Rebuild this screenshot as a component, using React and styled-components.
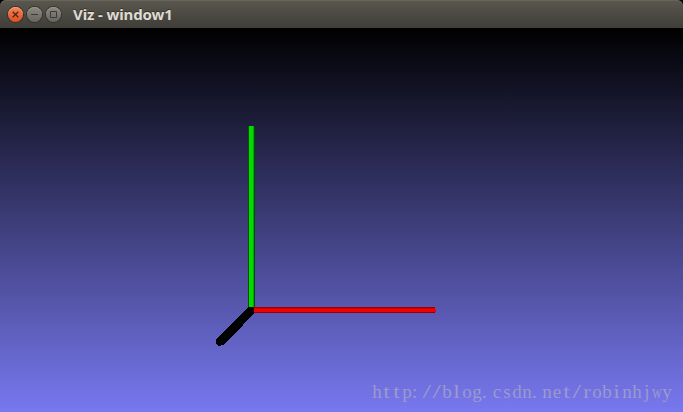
import React from "react";
import styled, { createGlobalStyle } from "styled-components";

const GlobalStyle = createGlobalStyle`
  body { margin: 0; background: #000; overflow: hidden; }
`;

const Window = styled.main`
  display: flex;
  flex-direction: column;
  width: 683px;
  height: 412px;
`;

const TitleBar = styled.header`
  display: flex;
  align-items: center;
  box-sizing: border-box;
  height: 28px;
  flex: none;
  padding: 1px 8px 0;
  border-radius: 6px 6px 0 0;
  background: linear-gradient(#5a574e, #3e3d38);
  box-shadow: inset 0 1px #67645b;
`;

const Controls = styled.div`
  display: flex;
  gap: 4px;
`;

const ControlButton = styled.button`
  display: block;
  box-sizing: border-box;
  width: 15px;
  height: 15px;
  padding: 0;
  border: 0;
  border-radius: 50%;
  background: ${(p) => (p.$close ? "linear-gradient(#f5835b, #df4f1c)" : "linear-gradient(#8a8880, #66645e)")};
  box-shadow: 0 0 0 1px #35332e, inset 0 1px ${(p) => (p.$close ? "#f79a78" : "#99978f")};
  color: ${(p) => (p.$close ? "#51291a" : "#3b3a35")};
`;

const Glyph = styled.svg`
  display: block;
  width: 15px;
  height: 15px;
  fill: none;
  stroke: currentColor;
  stroke-width: ${(p) => p.$weight || 1};
`;

const Title = styled.h1`
  margin: 0 0 2px 12px;
  font: 700 15px/20px "Noto Sans", "Open Sans", sans-serif;
  letter-spacing: -0.12px;
  color: #dfdbd2;
  text-shadow: 0 -1px #34332e;
  white-space: pre;
`;

const Viewport = styled.section`
  position: relative;
  flex: 1;
  background: linear-gradient(#000, #7878f0);
`;

const Axes = styled.svg`
  display: block;
  width: 683px;
  height: 384px;
`;

const Watermark = styled.div`
  position: absolute;
  right: 11px;
  bottom: 9px;
  display: flex;
  font: 19px/22px "Liberation Serif", serif;
  color: #9a9acb;
`;

const Cell = styled.span`
  display: flex;
  justify-content: ${(p) => (p.$left ? "flex-start" : "center")};
  width: 10px;
`;

const Letter = styled.span`
  transform: scaleX(${(p) => p.$scale});
`;

const scales = { w: 0.72, i: 1.25, l: 1.25, t: 1.25, r: 1.2, "/": 1.6 };
const address = "http://blog.csdn.net/robinhjwy";

export default function App() {
  return (
    <>
      <GlobalStyle />
      <Window>
        <TitleBar>
          <Controls>
            <ControlButton $close aria-label="Close">
              <Glyph viewBox="0 0 15 15" $weight={1.4}><path d="M4.7 4.7l5.6 5.6m0-5.6l-5.6 5.6" /></Glyph>
            </ControlButton>
            <ControlButton aria-label="Minimize">
              <Glyph viewBox="0 0 15 15"><path d="M4 7.5h7" /></Glyph>
            </ControlButton>
            <ControlButton aria-label="Maximize">
              <Glyph viewBox="0 0 15 15"><path d="M4.5 4.5h6v6h-6z" /></Glyph>
            </ControlButton>
          </Controls>
          <Title>Viz - window1</Title>
        </TitleBar>
        <Viewport>
          <Axes viewBox="0 28 683 384" shapeRendering="crispEdges">
            <path d="M248 126h6v183h-6z" fill="#00dc00" />
            <path d="M248 126h1v183h-1z" fill="#064b0d" />
            <path d="M253 126h1v183h-1z" fill="#00a800" />
            <path d="M254 127h1v181h-1z" fill="#064b0d" />
            <path d="M253 307h182v6h-182z" fill="#d50000" />
            <path d="M253 309h183v3h-183z" fill="#f00000" />
            <path d="M253 307h182v1h-182zM253 312h182v1h-182z" fill="#970000" />
            <path d="M249 307h4l1 2v4l-9 9-4 6-16 15-2 2-4 1-3-2v-5l4-4 17-17z" fill="#000" />
          </Axes>
          <Watermark>
            {[...address].map((char, index) => (
              <Cell key={index} $left={char === "." || char === ":"}>
                <Letter $scale={scales[char] || 1}>{char}</Letter>
              </Cell>
            ))}
          </Watermark>
        </Viewport>
      </Window>
    </>
  );
}
